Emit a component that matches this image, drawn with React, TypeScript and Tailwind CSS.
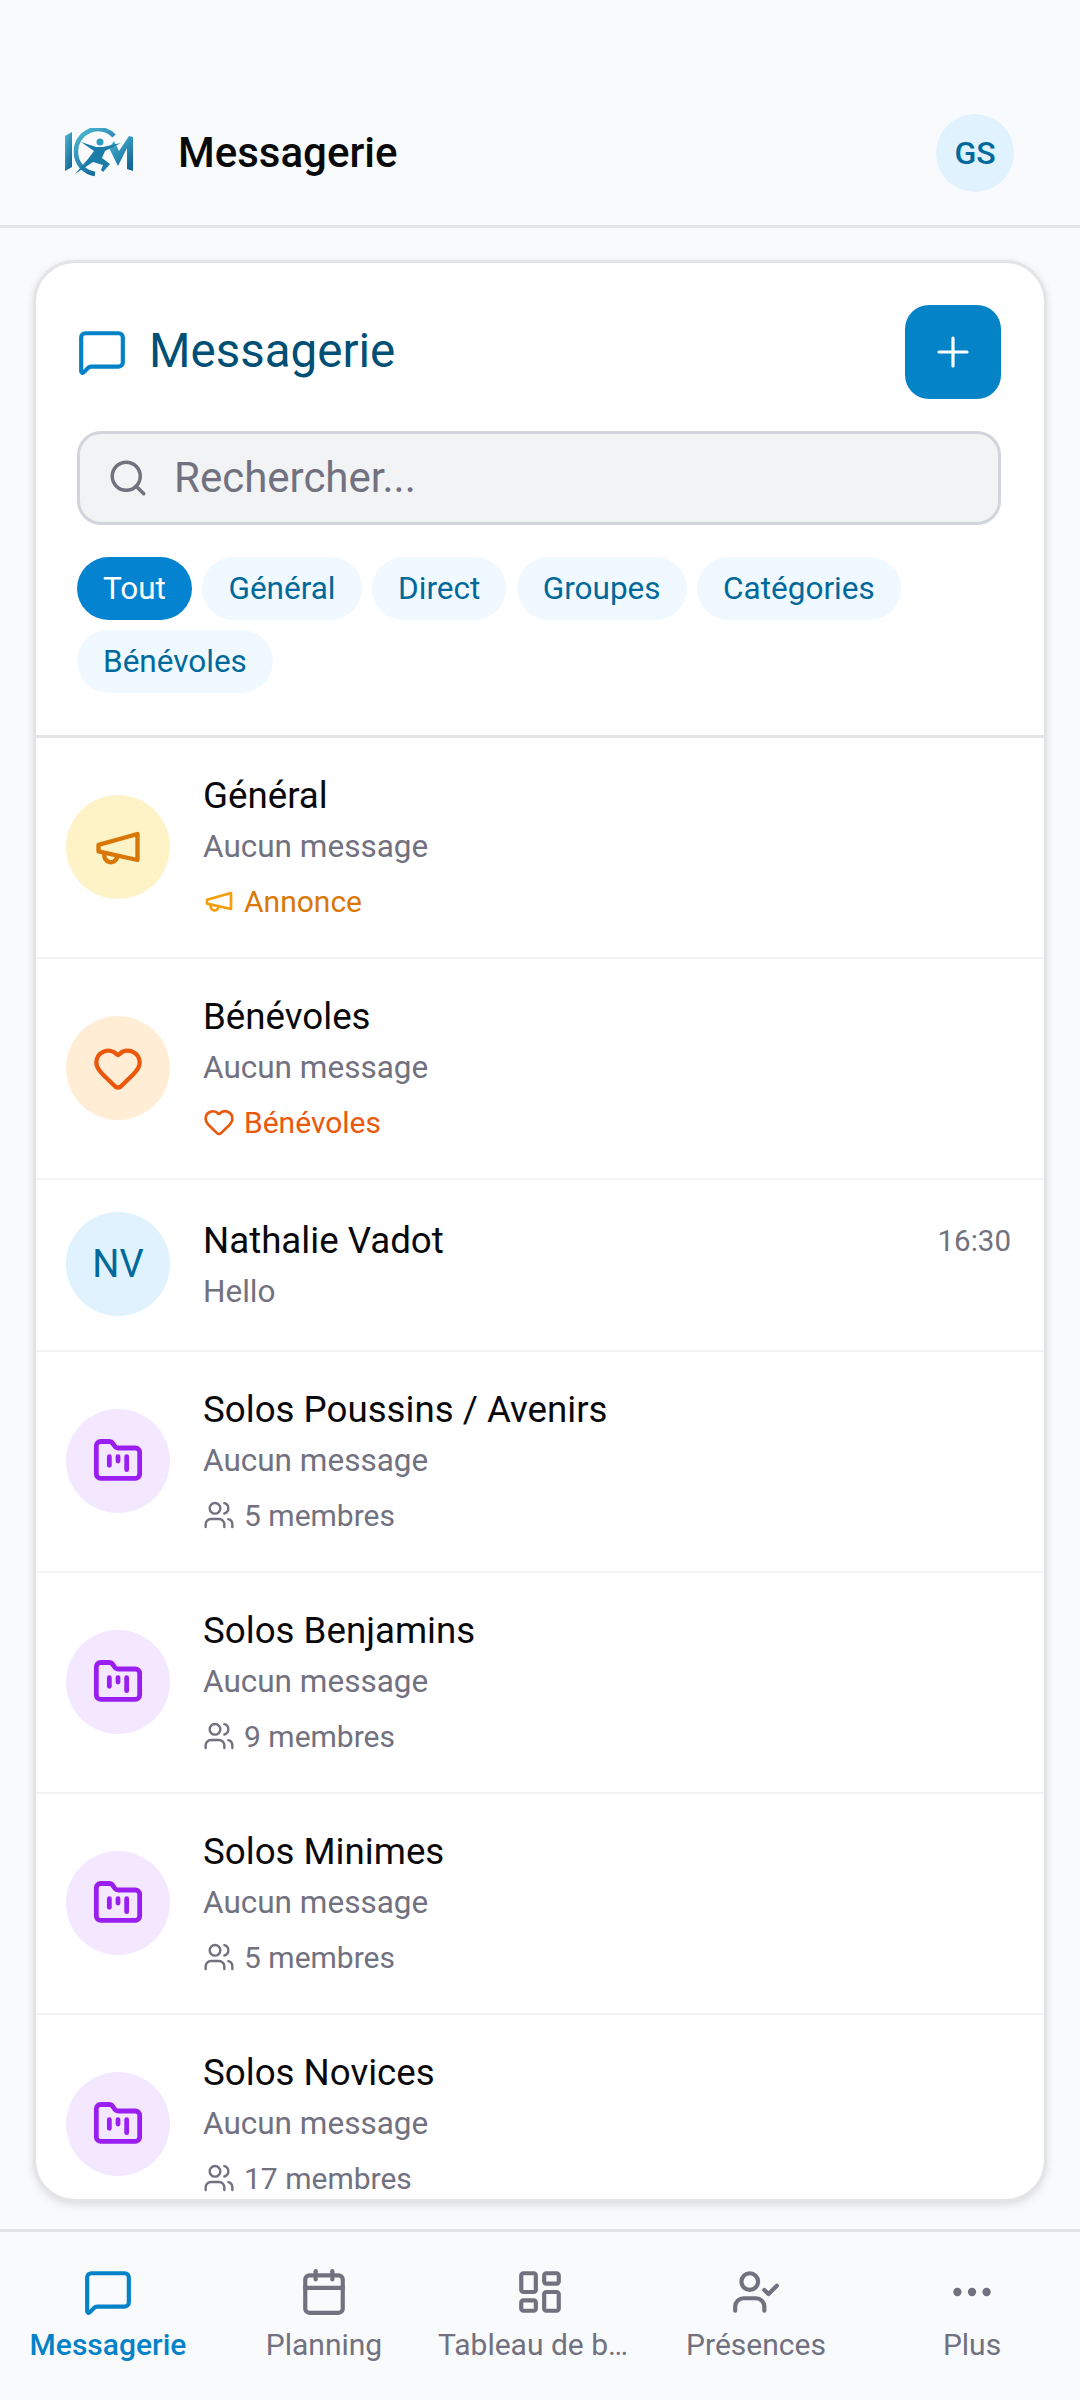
import { Calendar, Ellipsis, FolderKanban, Heart, LayoutDashboard, MessageSquare, Plus, Search, UserCheck, Users } from 'lucide-react'

const filters = ['Tout', 'Général', 'Direct', 'Groupes', 'Catégories', 'Bénévoles']

const Horn = ({ size, className }: { size: number; className?: string }) => (
    <svg width={size} height={size} viewBox="0 0 24 24" fill="none" stroke="currentColor" strokeWidth="2" strokeLinecap="round" strokeLinejoin="round" className={className}>
        <path d="m3 11 18-5v12L3 14v-3z" />
        <path d="M11.6 16.8a3 3 0 1 1-5.8-1.6" />
    </svg>
)

const Logo = () => (
    <svg width="68" height="50" viewBox="0 0 68 50">
        <defs>
            <linearGradient id="lg" x1="0" y1="0" x2="0.6" y2="1">
                <stop offset="0" stopColor="#4fbcd6" />
                <stop offset="1" stopColor="#14689a" />
            </linearGradient>
        </defs>
        <path d="M0 8 7 4V39L0 43Z" fill="url(#lg)" />
        <path d="M49 8A22 22 0 0 0 11 24A22 22 0 0 0 30 46" fill="none" stroke="url(#lg)" strokeWidth="4.5" />
        <path d="M49 13 54 23 64 8 68 9V43L62 41V20L53 38 44 20Z" fill="url(#lg)" />
        <circle cx="35" cy="14" r="3.5" fill="#2c9cc1" />
        <path d="M16 14 31 19 38 19 56 15 40 23 37 30 45 36 38 44 36 42 38 37 28 34 10 46 23 31 29 23Z" fill="#1c7ca8" />
    </svg>
)

interface RowProps {
    title: string
    tone: string
    icon: React.ReactNode
    meta?: React.ReactNode
    time?: string
    sub: string
}

const Row = ({ title, tone, icon, meta, time, sub }: RowProps) => (
    <div className="flex min-h-[171px] items-center gap-[33px] border-b-2 border-[#f4f4f5] pb-[34px] pl-[30px] pr-[33px] pt-[32px]">
        <div className={`flex h-[104px] w-[104px] shrink-0 items-center justify-center rounded-full ${tone}`}>{icon}</div>
        <div className="min-w-0 flex-1 pt-[2px]">
            <div className="flex items-center justify-between">
                <div className="text-[36.7px] leading-[48px] text-[#09090b]">{title}</div>
                {time && <div className="text-[29.5px] leading-[40px] text-[#71717f]">{time}</div>}
            </div>
            <div className="mt-[5px] text-[31.5px] leading-[44px] text-[#71717f]">{sub}</div>
            {meta && <div className="mt-[10px] flex h-[44px] items-center gap-[9px] text-[30px]">{meta}</div>}
        </div>
    </div>
)

const members = (count: number) => (
    <>
        <Users size={32} strokeWidth={1.8} className="text-[#71717f]" />
        <span className="text-[#71717f]">{count} membres</span>
    </>
)

const folder = <FolderKanban size={52} strokeWidth={2.2} className="text-[#9b1ef0]" />

const App = () => {
    return (
        <div className="flex h-[2400px] w-[1080px] flex-col overflow-hidden bg-[#f8fafc] font-['Roboto',sans-serif]">
            <header className="flex h-[228px] shrink-0 items-end border-b-[3px] border-[#e2e4e8] pb-[33px]">
                <div className="flex w-full items-center justify-between pl-[65px] pr-[66px]">
                    <div className="flex items-center gap-[45px]">
                        <Logo />
                        <h1 className="text-[42px] font-medium leading-[50px] text-[#09090b]">Messagerie</h1>
                    </div>
                    <div className="flex h-[78px] w-[78px] items-center justify-center rounded-full bg-[#e0f2fe] text-[32px] font-medium text-[#00699b]">GS</div>
                </div>
            </header>

            <main className="flex min-h-0 flex-1 flex-col pb-[27px] pl-[33px] pr-[33px] pt-[32px]">
                <div className="flex min-h-0 flex-1 flex-col overflow-hidden rounded-[42px] border-[3px] border-[#e4e4e7] bg-white shadow-[0_3px_9px_rgba(0,0,0,0.12)]">
                    <div className="border-b-[3px] border-[#e4e4e7] pb-[42px] pl-[41px] pr-[43px] pt-[42px]">
                        <div className="flex items-center justify-between">
                            <div className="flex items-center gap-[22px]">
                                <MessageSquare size={50} strokeWidth={2} className="text-[#0482c8]" />
                                <h2 className="pb-[2px] text-[47.5px] leading-[58px] text-[#004f74]">Messagerie</h2>
                            </div>
                            <button type="button" className="flex h-[94px] w-[96px] items-center justify-center rounded-[24px] bg-[#0483c6] text-white">
                                <Plus size={48} strokeWidth={1.6} />
                            </button>
                        </div>
                        <div className="mt-[32px] flex h-[94px] items-center gap-[25px] rounded-[24px] border-[3px] border-[#d1d5db] bg-[#f2f3f5] px-[27px]">
                            <Search size={42} strokeWidth={2} className="text-[#71717f]" />
                            <span className="pb-[2px] text-[42px] text-[#71717f]">Rechercher...</span>
                        </div>
                        <div className="mt-[32px] flex flex-wrap gap-x-[10.5px] gap-y-[10px]">
                            {filters.map((f, i) => (
                                <div key={f} className={`flex h-[63px] items-center rounded-full px-[26px] text-[31.5px] ${i === 0 ? 'bg-[#0483d0] text-white' : 'bg-[#f0f9ff] text-[#00699b]'}`}>
                                    {f}
                                </div>
                            ))}
                        </div>
                    </div>

                    <div className="min-h-0 flex-1 overflow-hidden">
                        <Row
                            title="Général"
                            sub="Aucun message"
                            tone="bg-[#fef3c7]"
                            icon={<Horn size={52} className="text-[#d97706]" />}
                            meta={<><Horn size={32} className="text-[#f59e0b]" /><span className="text-[#d97706]">Annonce</span></>}
                        />
                        <Row
                            title="Bénévoles"
                            sub="Aucun message"
                            tone="bg-[#ffedd5]"
                            icon={<Heart size={52} strokeWidth={2} className="text-[#ea580c]" />}
                            meta={<><Heart size={32} strokeWidth={2} className="text-[#ea580c]" /><span className="text-[#ea580c]">Bénévoles</span></>}
                        />
                        <Row
                            title="Nathalie Vadot"
                            sub="Hello"
                            time="16:30"
                            tone="bg-[#e0f2fe]"
                            icon={<span className="text-[38px] text-[#00699b]">NV</span>}
                        />
                        <Row title="Solos Poussins / Avenirs" sub="Aucun message" tone="bg-[#f3e8ff]" icon={folder} meta={members(5)} />
                        <Row title="Solos Benjamins" sub="Aucun message" tone="bg-[#f3e8ff]" icon={folder} meta={members(9)} />
                        <Row title="Solos Minimes" sub="Aucun message" tone="bg-[#f3e8ff]" icon={folder} meta={members(5)} />
                        <Row title="Solos Novices" sub="Aucun message" tone="bg-[#f3e8ff]" icon={folder} meta={members(17)} />
                    </div>
                </div>
            </main>

            <nav className="grid h-[171px] shrink-0 grid-cols-5 border-t-[3px] border-[#e2e4e8] pt-[35px]">
                {[
                    { label: 'Messagerie', Icon: MessageSquare },
                    { label: 'Planning', Icon: Calendar },
                    { label: 'Tableau de bord', Icon: LayoutDashboard },
                    { label: 'Présences', Icon: UserCheck },
                    { label: 'Plus', Icon: Ellipsis }
                ].map(({ label, Icon }, i) => (
                    <div key={label} className={`flex min-w-0 flex-col items-center px-[6px] ${i === 0 ? 'text-[#0482c8]' : 'text-[#71717f]'}`}>
                        <Icon size={50} strokeWidth={2} />
                        <span className={`mt-[8px] w-full truncate text-center text-[30px] leading-[40px] ${i === 0 ? 'font-medium' : ''}`}>{label}</span>
                    </div>
                ))}
            </nav>
        </div>
    )
}

export default App
